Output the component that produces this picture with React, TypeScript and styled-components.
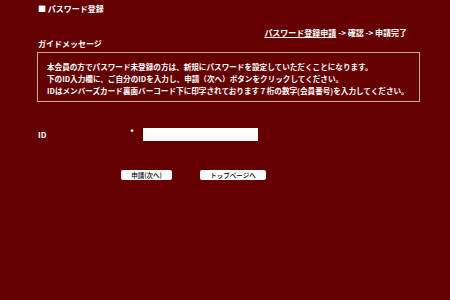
import { FC } from "react";
import styled, { createGlobalStyle } from "styled-components";

const GlobalStyle = createGlobalStyle`
  html, body {
    margin: 0;
    padding: 0;
    background: #650000;
  }
  body {
    font-family: "Noto Sans CJK JP", "Noto Sans", sans-serif;
    color: #ffffff;
  }
`;

const Page = styled.div`
  width: 450px;
  height: 300px;
  box-sizing: border-box;
  padding: 4px 30px 0 37px;
  background: #650000;
`;

const PageTitle = styled.h1`
  margin: 0;
  padding-left: 1px;
  font-size: 8px;
  line-height: 10px;
  font-weight: bold;
`;

const Steps = styled.div`
  margin-top: 14px;
  padding-right: 13px;
  text-align: right;
  font-size: 8px;
  line-height: 10px;
  font-weight: bold;
`;

const StepLink = styled.a`
  color: #ffffff;
  text-decoration: underline;
`;

const GuideTitle = styled.h2`
  margin: 1px 0 0;
  padding-left: 1px;
  font-size: 8px;
  line-height: 10px;
  font-weight: bold;
`;

const GuideBox = styled.div`
  margin-top: 3px;
  box-sizing: border-box;
  width: 383px;
  height: 50px;
  border: 1px solid #c8a4a4;
  padding: 8px 0 0 9px;
  font-size: 7.6px;
  line-height: 12px;
  font-weight: bold;
  white-space: nowrap;
`;

const FormRow = styled.div`
  display: grid;
  grid-template-columns: 94px 12px 115px;
  align-items: center;
  margin-top: 26px;
  padding-left: 1px;
  font-size: 8px;
  font-weight: bold;
`;

const Required = styled.span`
  font-size: 8px;
  align-self: start;
  line-height: 8px;
  margin-left: -2px;
`;

const TextInput = styled.input`
  box-sizing: border-box;
  width: 115px;
  height: 13px;
  border: none;
  background: #ffffff;
  padding: 0;
  margin-left: -1px;
`;

const Buttons = styled.div`
  display: flex;
  gap: 28px;
  margin-top: 29px;
  padding-left: 84px;
`;

const Button = styled.button<{ $width: number }>`
  box-sizing: border-box;
  width: ${(p) => p.$width}px;
  height: 10px;
  padding: 0;
  border: none;
  border-radius: 2px;
  background: #ffffff;
  color: #000000;
  font-family: "Noto Sans CJK JP", sans-serif;
  font-size: 6.5px;
  font-weight: 500;
  line-height: 10px;
`;

const App: FC = () => {
  return (
    <Page>
      <GlobalStyle />
      <PageTitle>■ パスワード登録</PageTitle>
      <Steps>
        <StepLink>パスワード登録申請</StepLink> -&gt; 確認 -&gt; 申請完了
      </Steps>
      <GuideTitle>ガイドメッセージ</GuideTitle>
      <GuideBox>
        本会員の方でパスワード未登録の方は、新規にパスワードを設定していただくことになります。
        <br />
        下のID入力欄に、ご自分のIDを入力し、申請（次へ）ボタンをクリックしてください。
        <br />
        IDはメンバーズカード裏面バーコード下に印字されております７桁の数字(会員番号)を入力してください。
      </GuideBox>
      <FormRow>
        <span>ID</span>
        <Required>*</Required>
        <TextInput type="text" />
      </FormRow>
      <Buttons>
        <Button $width={51}>申請(次へ)</Button>
        <Button $width={66}>トップページへ</Button>
      </Buttons>
    </Page>
  );
};

export default App;
